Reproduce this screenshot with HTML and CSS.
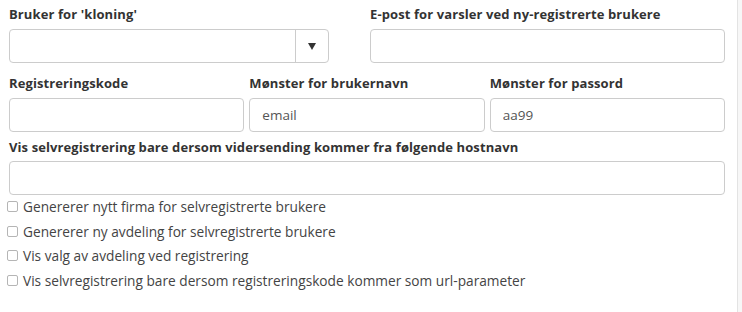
FILE: index.html
```
<!DOCTYPE html>
<html lang="no">

<head>
    <meta charset="UTF-8">
    <meta name="viewport" content="width=device-width, initial-scale=1.0">
    <title>Selvregistrering</title>
    <link rel="stylesheet" href="styles.css">
</head>

<body>
    <div class="panel">
        <form class="settings">
            <div class="row row-two">
                <div class="field">
                    <label class="label">Bruker for 'kloning'</label>
                    <div class="select">
                        <span class="select-value"></span>
                        <span class="select-arrow"><i class="caret"></i></span>
                    </div>
                </div>
                <div class="field">
                    <label class="label">E-post for varsler ved ny-registrerte brukere</label>
                    <input class="input" type="text">
                </div>
            </div>

            <div class="row row-three">
                <div class="field">
                    <label class="label">Registreringskode</label>
                    <input class="input" type="text">
                </div>
                <div class="field">
                    <label class="label">Mønster for brukernavn</label>
                    <input class="input" type="text" value="email">
                </div>
                <div class="field">
                    <label class="label">Mønster for passord</label>
                    <input class="input" type="text" value="aa99">
                </div>
            </div>

            <div class="row row-one">
                <div class="field">
                    <label class="label">Vis selvregistrering bare dersom vidersending kommer fra følgende hostnavn</label>
                    <input class="input" type="text">
                </div>
            </div>

            <div class="checks">
                <label class="check"><input type="checkbox"><span>Genererer nytt firma for selvregistrerte brukere</span></label>
                <label class="check"><input type="checkbox"><span>Genererer ny avdeling for selvregistrerte brukere</span></label>
                <label class="check"><input type="checkbox"><span>Vis valg av avdeling ved registrering</span></label>
                <label class="check"><input type="checkbox"><span>Vis selvregistrering bare dersom registreringskode kommer som url-parameter</span></label>
            </div>
        </form>
        <div class="side"></div>
    </div>
</body>

</html>
```

FILE: styles.css
```
html,
body {
    margin: 0;
    padding: 0;
    background: #fff;
}

body {
    font-family: "Open Sans", "Lato", sans-serif;
    color: #333;
}

.panel {
    display: flex;
    height: 312px;
}

.settings {
    width: 737px;
    padding: 0 12px 0 9px;
    box-sizing: border-box;
}

.side {
    flex: 1;
    border-left: 1px solid #e3e3e3;
    background: #f7f7f7;
}

.row {
    display: flex;
    gap: 5px;
}

.row .field {
    flex: 1;
}

.row-two {
    gap: 41px;
    padding-top: 6px;
}

.row-two .field:first-child {
    flex: none;
    width: 320px;
}

.row-three {
    padding-top: 12px;
}

.row-one {
    padding-top: 7px;
}

.row-one .label {
    margin-bottom: 6px;
}

.label {
    display: block;
    font-size: 13px;
    font-weight: 700;
    line-height: 16px;
    margin-bottom: 7px;
    color: #333;
    letter-spacing: 0.1px;
}

.input,
.select {
    display: block;
    width: 100%;
    height: 34px;
    box-sizing: border-box;
    border: 1px solid #ccc;
    border-radius: 4px;
    padding: 0 12px;
    font-family: inherit;
    font-size: 13.5px;
    color: #555;
    background: #fff;
}

.select {
    display: flex;
    padding: 0;
}

.select-value {
    flex: 1;
}

.select-arrow {
    width: 32px;
    border-left: 1px solid #ccc;
    display: flex;
    align-items: center;
    justify-content: center;
}

.caret {
    width: 0;
    height: 0;
    border-left: 4px solid transparent;
    border-right: 4px solid transparent;
    border-top: 7px solid #333;
}

.checks {
    margin-top: -1px;
}

.check {
    display: flex;
    align-items: center;
    height: 24.7px;
    margin-left: -2px;
    font-size: 13.7px;
    color: #444;
}

.check input {
    width: 11px;
    height: 11px;
    margin: 0 5px 0 0;
    appearance: none;
    border: 1px solid #b5b5b5;
    border-radius: 2px;
    background: #fff;
}
```
